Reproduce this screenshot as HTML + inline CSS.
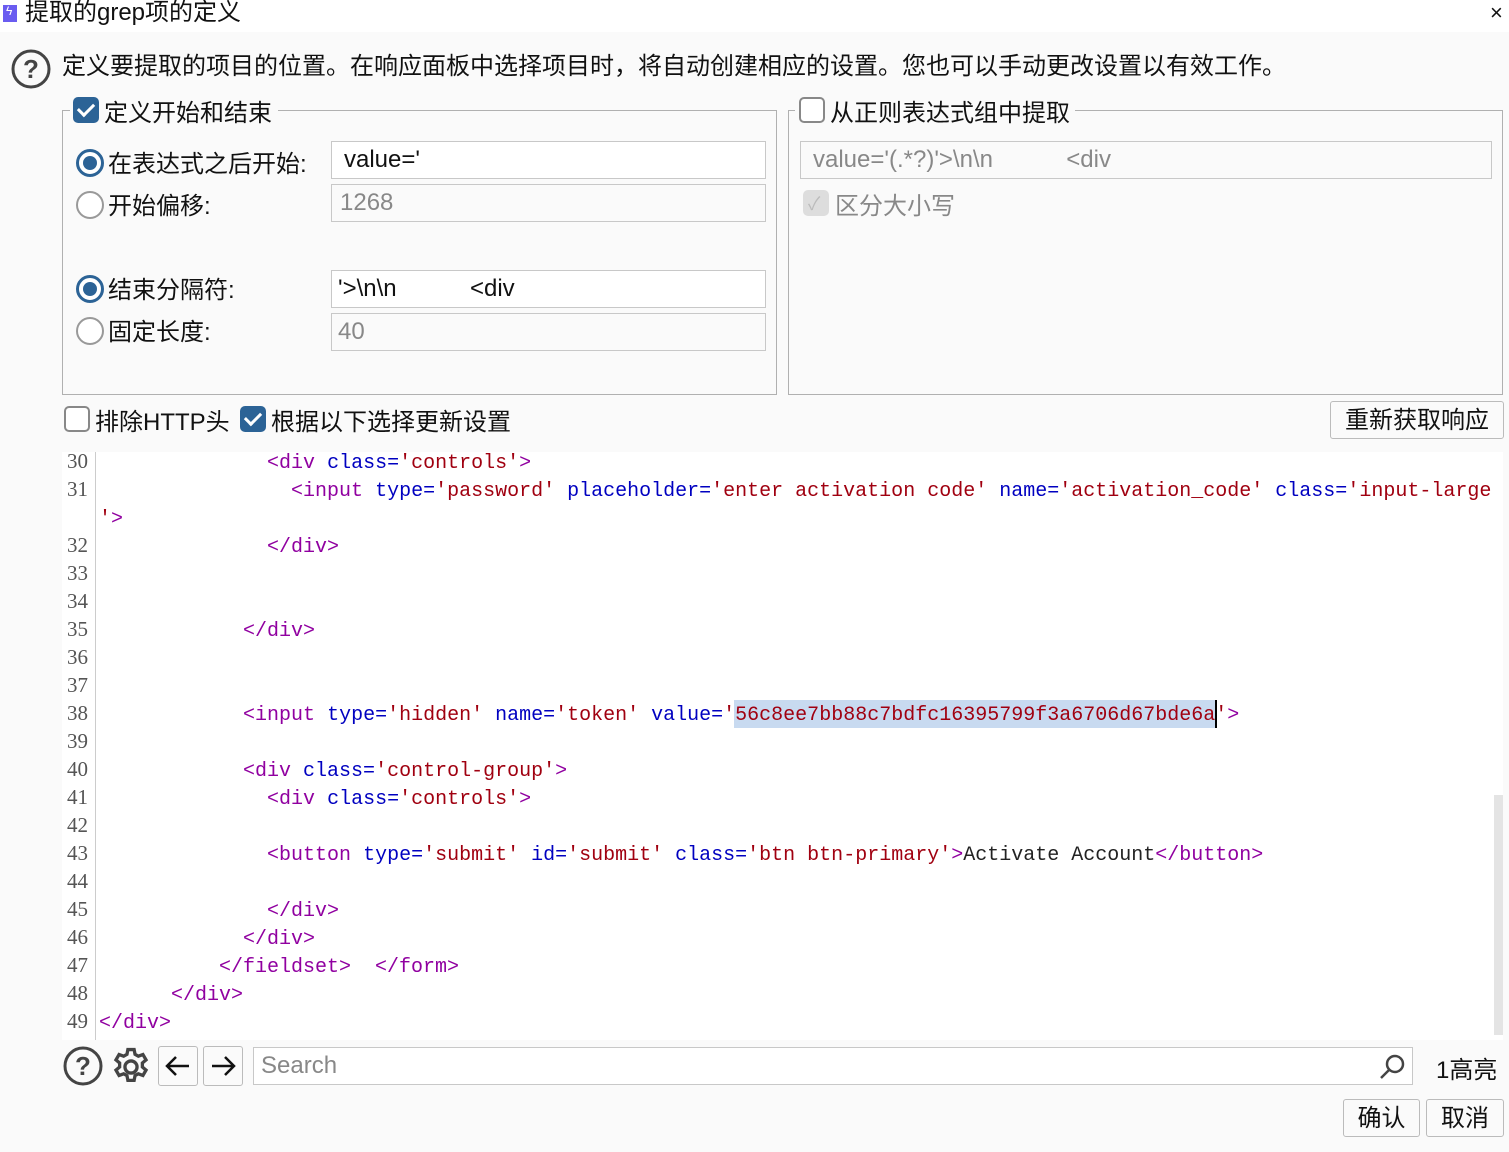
<!DOCTYPE html>
<html><head><meta charset="utf-8"><style>
*{margin:0;padding:0;box-sizing:border-box}
body{width:1509px;height:1152px;background:#fafafa;position:relative;overflow:hidden;font-family:"Liberation Sans","Noto Sans CJK SC",sans-serif;color:#111}
.a{position:absolute;white-space:pre}
.t{font-size:24px}
.inp{position:absolute;border:1px solid #c8c8c8;background:#fff;font-size:24px;padding-left:12px;line-height:36px;height:38px;white-space:pre}
.dis{background:#fafafa;color:#888}
.cb{position:absolute;width:26px;height:26px;border-radius:5px}
.cb.on{background:#2c6396}
.cb.off{border:2px solid #888;background:#fff}
.cb.on:after{content:"";position:absolute;left:8px;top:3px;width:7px;height:13px;border:solid #fff;border-width:0 3px 3px 0;transform:rotate(45deg)}
.rd{position:absolute;width:28px;height:28px;border-radius:50%;border:2px solid #999;background:#fff}
.rd.on{border:3px solid #2c6396}
.rd.on:after{content:"";position:absolute;left:4px;top:4px;width:14px;height:14px;border-radius:50%;background:#2c6396}
.grp{position:absolute;border:1px solid #b0b0b0}
.btn{position:absolute;border:1px solid #bbb;border-radius:3px;background:#fafafa;font-size:24px;text-align:center}
.code{position:absolute;left:62px;top:452px;width:1441px;height:641px;background:#fff}
.ln{position:absolute;font-family:"Liberation Serif",serif;font-size:21px;color:#555;width:26px;text-align:right;left:0}
.cl{position:absolute;font-family:"Liberation Mono",monospace;font-size:20px;left:37px;white-space:pre}
.g{color:#9000a0}.b{color:#0000c0}.r{color:#a00010}.k{color:#222}
</style></head><body>
<div class="a" style="left:0;top:0;width:1509px;height:32px;background:#fff"></div>
<div class="a" style="left:3px;top:5px;width:14px;height:17px;background:#6a5cf0"></div>
<div class="a" style="left:6px;top:4px;color:#fff;font-size:12px">ϟ</div>
<div class="a t" style="left:25px;top:-2px;line-height:30px">提取的grep项的定义</div>
<div class="a" style="left:1490px;top:0;font-size:22px">×</div>

<svg class="a" style="left:10px;top:48px" width="42" height="42"><circle cx="21" cy="21" r="18" fill="none" stroke="#444" stroke-width="3"/><text x="21" y="30" font-size="26" font-family="Liberation Sans" font-weight="bold" text-anchor="middle" fill="#444">?</text></svg>
<div class="a t" style="left:62px;top:46px">定义要提取的项目的位置。在响应面板中选择项目时，将自动创建相应的设置。您也可以手动更改设置以有效工作。</div>

<div class="grp" style="left:62px;top:110px;width:715px;height:285px"></div>
<div class="a" style="left:70px;top:100px;width:208px;height:20px;background:#fafafa"></div>
<div class="cb on" style="left:73px;top:97px"></div>
<div class="a t" style="left:104px;top:93px">定义开始和结束</div>

<div class="rd on" style="left:76px;top:149px"></div>
<div class="a t" style="left:108px;top:144px">在表达式之后开始:</div>
<div class="inp" style="left:331px;top:141px;width:435px">value='</div>
<div class="rd" style="left:76px;top:191px"></div>
<div class="a t" style="left:108px;top:186px">开始偏移:</div>
<div class="inp dis" style="left:331px;top:184px;width:435px;padding-left:8px">1268</div>
<div class="rd on" style="left:76px;top:275px"></div>
<div class="a t" style="left:108px;top:270px">结束分隔符:</div>
<div class="inp" style="left:331px;top:270px;width:435px;padding-left:6px">'&gt;\n\n           &lt;div</div>
<div class="rd" style="left:76px;top:317px"></div>
<div class="a t" style="left:108px;top:312px">固定长度:</div>
<div class="inp dis" style="left:331px;top:313px;width:435px;padding-left:6px">40</div>

<div class="grp" style="left:788px;top:110px;width:715px;height:285px"></div>
<div class="a" style="left:795px;top:100px;width:280px;height:20px;background:#fafafa"></div>
<div class="cb off" style="left:799px;top:97px"></div>
<div class="a t" style="left:830px;top:93px">从正则表达式组中提取</div>
<div class="inp dis" style="left:800px;top:141px;width:692px">value='(.*?)'&gt;\n\n           &lt;div</div>
<div class="cb" style="left:803px;top:190px;background:#ddd"></div>
<div class="a" style="left:808px;top:190px;color:#bbb;font-size:18px">✓</div>
<div class="a t" style="left:835px;top:186px;color:#888">区分大小写</div>

<div class="cb off" style="left:64px;top:406px"></div>
<div class="a t" style="left:95px;top:402px">排除HTTP头</div>
<div class="cb on" style="left:240px;top:406px"></div>
<div class="a t" style="left:271px;top:402px">根据以下选择更新设置</div>
<div class="btn" style="left:1330px;top:401px;width:174px;height:38px;line-height:38px">重新获取响应</div>

<div class="code">
<div class="a" style="left:33px;top:0;width:1px;height:641px;background:#ccc"></div>
<div class="a" style="left:1432px;top:343px;width:9px;height:240px;background:#e4e4e4"></div>
<div class="ln" style="top:-3px">30</div><div class="cl" style="top:0px"><span class="g">              &lt;div</span> <span class="b">class=</span><span class="r">'controls'</span><span class="g">&gt;</span></div>
<div class="ln" style="top:25px">31</div><div class="cl" style="top:28px"><span class="g">                &lt;input</span> <span class="b">type=</span><span class="r">'password'</span> <span class="b">placeholder=</span><span class="r">'enter activation code'</span> <span class="b">name=</span><span class="r">'activation_code'</span> <span class="b">class=</span><span class="r">'input-large</span></div>
<div class="cl" style="top:56px"><span class="r">'</span><span class="g">&gt;</span></div>
<div class="ln" style="top:81px">32</div><div class="cl" style="top:84px"><span class="g">              &lt;/div&gt;</span></div>
<div class="ln" style="top:109px">33</div>
<div class="ln" style="top:137px">34</div>
<div class="ln" style="top:165px">35</div><div class="cl" style="top:168px"><span class="g">            &lt;/div&gt;</span></div>
<div class="ln" style="top:193px">36</div>
<div class="ln" style="top:221px">37</div>
<div class="a" style="left:672px;top:248px;width:482px;height:28px;background:#c8daf0"></div>
<div class="a" style="left:1153px;top:248px;width:2px;height:28px;background:#000"></div>
<div class="ln" style="top:249px">38</div><div class="cl" style="top:252px"><span class="g">            &lt;input</span> <span class="b">type=</span><span class="r">'hidden'</span> <span class="b">name=</span><span class="r">'token'</span> <span class="b">value=</span><span class="r">'56c8ee7bb88c7bdfc16395799f3a6706d67bde6a'</span><span class="g">&gt;</span></div>
<div class="ln" style="top:277px">39</div>
<div class="ln" style="top:305px">40</div><div class="cl" style="top:308px"><span class="g">            &lt;div</span> <span class="b">class=</span><span class="r">'control-group'</span><span class="g">&gt;</span></div>
<div class="ln" style="top:333px">41</div><div class="cl" style="top:336px"><span class="g">              &lt;div</span> <span class="b">class=</span><span class="r">'controls'</span><span class="g">&gt;</span></div>
<div class="ln" style="top:361px">42</div>
<div class="ln" style="top:389px">43</div><div class="cl" style="top:392px"><span class="g">              &lt;button</span> <span class="b">type=</span><span class="r">'submit'</span> <span class="b">id=</span><span class="r">'submit'</span> <span class="b">class=</span><span class="r">'btn btn-primary'</span><span class="g">&gt;</span><span class="k">Activate Account</span><span class="g">&lt;/button&gt;</span></div>
<div class="ln" style="top:417px">44</div>
<div class="ln" style="top:445px">45</div><div class="cl" style="top:448px"><span class="g">              &lt;/div&gt;</span></div>
<div class="ln" style="top:473px">46</div><div class="cl" style="top:476px"><span class="g">            &lt;/div&gt;</span></div>
<div class="ln" style="top:501px">47</div><div class="cl" style="top:504px"><span class="g">          &lt;/fieldset&gt;  &lt;/form&gt;</span></div>
<div class="ln" style="top:529px">48</div><div class="cl" style="top:532px"><span class="g">      &lt;/div&gt;</span></div>
<div class="ln" style="top:557px">49</div><div class="cl" style="top:560px"><span class="g">&lt;/div&gt;</span></div>
<div class="a" style="left:0;top:588px;width:1441px;height:53px;background:#fafafa"></div>
</div>

<svg class="a" style="left:62px;top:1045px" width="44" height="44"><circle cx="21" cy="21" r="18" fill="none" stroke="#444" stroke-width="3"/><text x="21" y="30" font-size="26" font-family="Liberation Sans" font-weight="bold" text-anchor="middle" fill="#444">?</text></svg>
<svg class="a" style="left:109px;top:1045px" width="44" height="44" viewBox="0 0 24 24"><path fill="none" stroke="#444" stroke-width="1.8" d="M10.3 2.5h3.4l.5 2.6 1.8 1 2.5-.9 1.7 2.9-2 1.7v2.2l2 1.7-1.7 2.9-2.5-.9-1.8 1-.5 2.6h-3.4l-.5-2.6-1.8-1-2.5.9-1.7-2.9 2-1.7v-2.2l-2-1.7 1.7-2.9 2.5.9 1.8-1z"/><circle cx="12" cy="12" r="3.3" fill="none" stroke="#444" stroke-width="1.8"/></svg>
<div class="btn" style="left:158px;top:1046px;width:40px;height:40px"><svg width="38" height="38"><path d="M30 19H8M17 10l-9 9 9 9" fill="none" stroke="#111" stroke-width="2.5"/></svg></div>
<div class="btn" style="left:203px;top:1046px;width:40px;height:40px"><svg width="38" height="38"><path d="M8 19h22M21 10l9 9-9 9" fill="none" stroke="#111" stroke-width="2.5"/></svg></div>
<div class="inp" style="left:253px;top:1047px;width:1160px;color:#888;padding-left:7px">Search</div>
<svg class="a" style="left:1378px;top:1052px" width="30" height="30"><circle cx="17" cy="12" r="8" fill="none" stroke="#444" stroke-width="2.5"/><path d="M11 18l-8 8" stroke="#444" stroke-width="2.5"/></svg>
<div class="a t" style="left:1436px;top:1050px">1高亮</div>

<div class="btn" style="left:1343px;top:1099px;width:77px;height:38px;line-height:38px">确认</div>
<div class="btn" style="left:1426px;top:1099px;width:78px;height:38px;line-height:38px">取消</div>
</body></html>
